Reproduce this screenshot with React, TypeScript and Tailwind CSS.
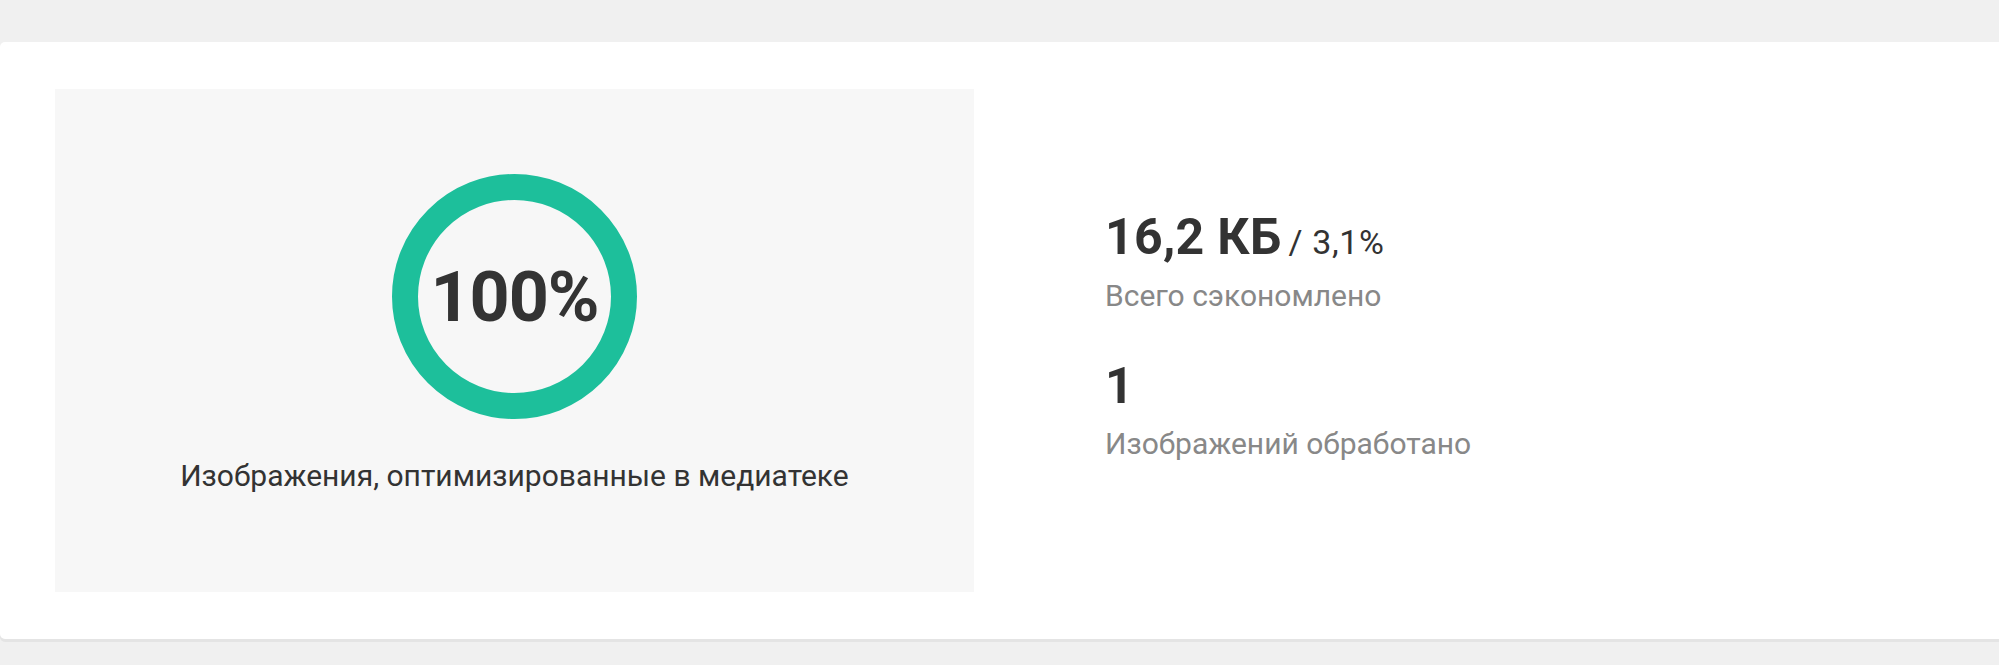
import React from 'react';

const font = { fontFamily: 'Roboto, "Noto Sans", sans-serif' };

function ProgressRing() {
    return (
        <div className="relative w-[245px] h-[245px]">
            <svg width="245" height="245" viewBox="0 0 245 245" className="absolute inset-0">
                <circle cx="122.5" cy="122.5" r="109.5" fill="none" stroke="#1dbf9b" strokeWidth="26" />
            </svg>
            <div className="absolute inset-0 flex items-center justify-center">
                <span className="text-[70px] leading-none font-bold text-[#333333] tracking-[-1px]">100%</span>
            </div>
        </div>
    );
}

export default function App() {
    return (
        <div className="min-h-[665px] w-full bg-[#f0f0f0] pt-[42px]" style={font}>
            <div className="bg-white rounded-l-[5px] shadow-[0_3px_0_#e4e4e4] flex items-center h-[597px] pl-[55px]">
                <div className="w-[919px] h-[503px] bg-[#f7f7f7] flex flex-col items-center pt-[85px]">
                    <ProgressRing />
                    <p className="mt-[39px] text-[30px] leading-[36px] text-[#333333]">
                        Изображения, оптимизированные в медиатеке
                    </p>
                </div>
                <div className="ml-[131px] flex flex-col pb-[12px]">
                    <div className="flex items-baseline h-[60px] leading-[60px]">
                        <span className="text-[50px] font-bold text-[#333333] tracking-[0.3px]">16,2 КБ</span>
                        <span className="text-[34px] text-[#333333] ml-[7px] tracking-[0.6px]">/ 3,1%</span>
                    </div>
                    <span className="mt-[11px] text-[30px] leading-[36px] text-[#888888]">Всего сэкономлено</span>
                    <span className="mt-[42px] text-[50px] leading-[60px] font-bold text-[#333333]">1</span>
                    <span className="mt-[10px] text-[30px] leading-[36px] text-[#888888]">Изображений обработано</span>
                </div>
            </div>
        </div>
    );
}
